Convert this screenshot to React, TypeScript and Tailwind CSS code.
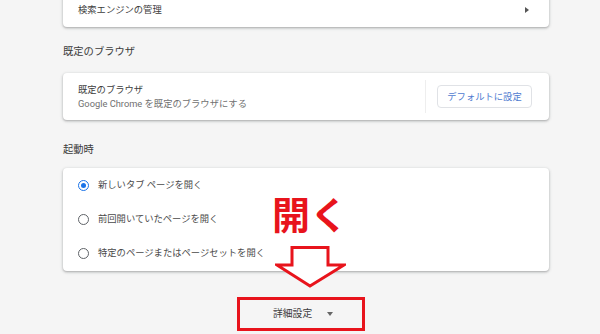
const cardClass =
    "bg-white rounded-[4px] shadow-[0_1px_2px_rgba(60,64,67,0.3),0_1px_3px_1px_rgba(60,64,67,0.12)]"

const RadioRow = ({ label, checked }: { label: string; checked?: boolean }) => {
    return (
        <div className="flex items-center h-[34px] pl-[15px]">
            {checked ? (
                <span className="flex items-center justify-center w-[11px] h-[11px] rounded-full border-[1.5px] border-[#1a73e8]">
                    <span className="w-[5px] h-[5px] rounded-full bg-[#1a73e8]" />
                </span>
            ) : (
                <span className="w-[11px] h-[11px] rounded-full border-[1.5px] border-[#5f6368]" />
            )}
            <span className="ml-[9px] text-[9.3px] text-[#4a4a4a]">{label}</span>
        </div>
    )
}

export default function App() {
    return (
        <div className="relative w-[600px] h-[334px] overflow-hidden bg-[#f5f5f5] font-['Roboto','Noto_Sans_CJK_JP',sans-serif]">
            <div className="flex flex-col pl-[63px] pr-[51px]">
                {/* search engine card, top is cut off */}
                <div className={`${cardClass} mt-[-8px] h-[35px] flex items-center justify-between pl-[15px] pr-[20px]`}>
                    <span className="text-[9.3px] text-[#3c3c3c]">検索エンジンの管理</span>
                    <span className="w-0 h-0 border-y-[3px] border-y-transparent border-l-[4px] border-l-[#555]" />
                </div>

                <div className="mt-[18px] mb-[14px] leading-[14px] text-[10.3px] text-[#3c3c3c]">既定のブラウザ</div>

                <div className={`${cardClass} h-[47px] flex items-center justify-between pl-[15px] pr-[17px]`}>
                    <div className="flex flex-col">
                        <span className="leading-[14px] text-[9.3px] text-[#3c3c3c]">既定のブラウザ</span>
                        <span className="leading-[14px] text-[9.3px] text-[#707070]">Google Chrome を既定のブラウザにする</span>
                    </div>
                    <div className="flex items-center h-full">
                        <div className="w-px h-[33px] bg-[#eeeeee] mr-[11px]" />
                        <div className="flex items-center justify-center w-[95px] h-[23px] rounded-[4px] border border-[#e0e2e6] text-[9.3px] text-[#4f7bd0]">
                            デフォルトに設定
                        </div>
                    </div>
                </div>

                <div className="mt-[23px] mb-[11px] leading-[14px] text-[10.3px] text-[#3c3c3c]">起動時</div>

                <div className={`${cardClass} flex flex-col pb-px`}>
                    <RadioRow label="新しいタブ ページを開く" checked />
                    <RadioRow label="前回開いていたページを開く" />
                    <RadioRow label="特定のページまたはページセットを開く" />
                </div>
            </div>

            <div className="flex justify-center mt-[26px] pl-[2px]">
                <div className="flex items-center h-[34px] w-[128px] border-[3px] border-[#e8141c] pl-[33px]">
                    <span className="text-[9.8px] text-[#3c3c3c]">詳細設定</span>
                    <span className="ml-[15px] w-0 h-0 border-x-[3.5px] border-x-transparent border-t-[4px] border-t-[#666]" />
                </div>
            </div>

            {/* annotation overlay */}
            <div className="absolute left-[267px] top-[183px] w-[86px] h-[59px] bg-white flex items-center justify-center">
                <span className="text-[38px] leading-none font-bold text-[#e8141c] font-['Noto_Sans_CJK_JP',sans-serif]">開く</span>
            </div>
            <svg className="absolute left-[275px] top-[246px]" width="71" height="42" viewBox="0 0 71 42">
                <polygon
                    points="17,1.5 53,1.5 53,19 69,19 35,40 2,19 17,19"
                    fill="white"
                    stroke="#e8141c"
                    strokeWidth="3"
                    strokeLinejoin="miter"
                />
            </svg>
        </div>
    )
}
